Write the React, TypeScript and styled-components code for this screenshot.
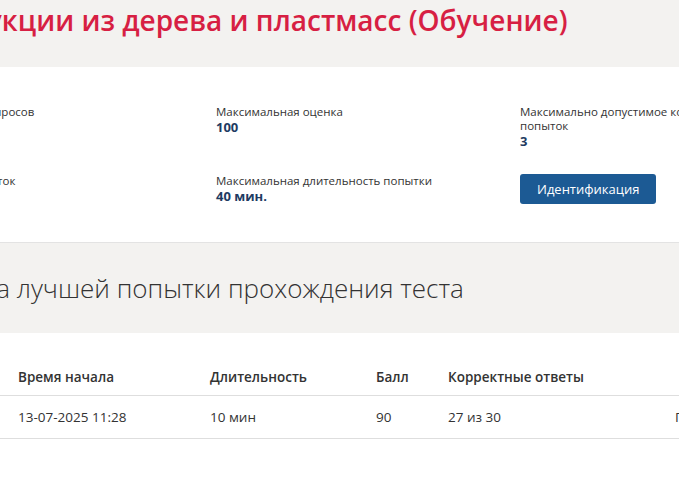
import styled, { createGlobalStyle } from "styled-components";

const GlobalStyle = createGlobalStyle`
  html, body {
    margin: 0;
    padding: 0;
    background: #ffffff;
    overflow: hidden;
  }
  body {
    font-family: "Open Sans", "Noto Sans", Arial, sans-serif;
    color: #333333;
  }
`;

const Page = styled.div`
  width: 1100px;
  margin-left: -120px;
`;

const TitleBand = styled.header`
  background: #f3f2f0;
  height: 67px;
  padding: 0 0 0 8px;
  box-sizing: border-box;
`;

const Title = styled.h1`
  margin: 0;
  padding-top: 1px;
  font-size: 28px;
  line-height: 38px;
  font-weight: 600;
  color: #d71f43;
  white-space: nowrap;
`;

const InfoCard = styled.section`
  background: #ffffff;
  padding: 38px 32px 38px;
  border-bottom: 1px solid #e3e3e3;
`;

const InfoGrid = styled.div`
  display: grid;
  grid-template-columns: repeat(3, 304px);
  row-gap: 25px;
`;

const InfoItem = styled.div`
  max-width: 230px;
`;

const InfoLabel = styled.div`
  font-size: 11.5px;
  line-height: 14px;
  color: #333333;
`;

const InfoValue = styled.div`
  font-size: 13px;
  line-height: 16px;
  font-weight: 700;
  color: #1e3b62;
`;

const PrimaryButton = styled.button`
  font-family: inherit;
  font-size: 13px;
  font-weight: 500;
  color: #ffffff;
  background: #1c5a94;
  border: none;
  border-radius: 3px;
  height: 30px;
  padding: 0 17px;
  cursor: pointer;
`;

const SectionBand = styled.section`
  background: #f3f2f0;
  height: 90px;
  display: flex;
  align-items: center;
`;

const SectionTitle = styled.h2`
  margin: 0 0 0 -4px;
  font-size: 26px;
  font-weight: 300;
  line-height: 36px;
  color: #333333;
  white-space: nowrap;
`;

const ResultsTable = styled.table`
  margin-top: 22px;
  border-collapse: collapse;
  table-layout: fixed;
  width: 920px;
`;

const Th = styled.th<{ $w?: number }>`
  width: ${(p) => (p.$w ? `${p.$w}px` : "auto")};
  text-align: left;
  font-size: 13.5px;
  font-weight: 600;
  line-height: 20px;
  color: #333333;
  padding: 12px 0 8px;
  border-bottom: 1px solid #dedede;
  white-space: nowrap;
`;

const Td = styled.td`
  font-size: 13.5px;
  line-height: 20px;
  color: #333333;
  padding: 11px 0;
  border-bottom: 1px solid #dedede;
  white-space: nowrap;
`;

const info = [
  { label: "Количество вопросов", value: "30" },
  { label: "Максимальная оценка", value: "100" },
  { label: "Максимально допустимое количество попыток", value: "3" },
  { label: "Осталось попыток", value: "2" },
  { label: "Максимальная длительность попытки", value: "40 мин." },
];

export default function App() {
  return (
    <>
      <GlobalStyle />
      <Page>
        <TitleBand>
          <Title>Конструкции из дерева и пластмасс (Обучение)</Title>
        </TitleBand>

        <InfoCard>
          <InfoGrid>
            {info.map((item) => (
              <InfoItem key={item.label}>
                <InfoLabel>{item.label}</InfoLabel>
                <InfoValue>{item.value}</InfoValue>
              </InfoItem>
            ))}
            <InfoItem>
              <PrimaryButton>Идентификация</PrimaryButton>
            </InfoItem>
          </InfoGrid>
        </InfoCard>

        <SectionBand>
          <SectionTitle>Статистика лучшей попытки прохождения теста</SectionTitle>
        </SectionBand>

        <ResultsTable>
          <thead>
            <tr>
              <Th $w={138}>Попытка</Th>
              <Th $w={192}>Время начала</Th>
              <Th $w={166}>Длительность</Th>
              <Th $w={72}>Балл</Th>
              <Th $w={227}>Корректные ответы</Th>
              <Th></Th>
            </tr>
          </thead>
          <tbody>
            <tr>
              <Td>1</Td>
              <Td>13-07-2025 11:28</Td>
              <Td>10 мин</Td>
              <Td>90</Td>
              <Td>27 из 30</Td>
              <Td>Просмотр</Td>
            </tr>
          </tbody>
        </ResultsTable>
      </Page>
    </>
  );
}
